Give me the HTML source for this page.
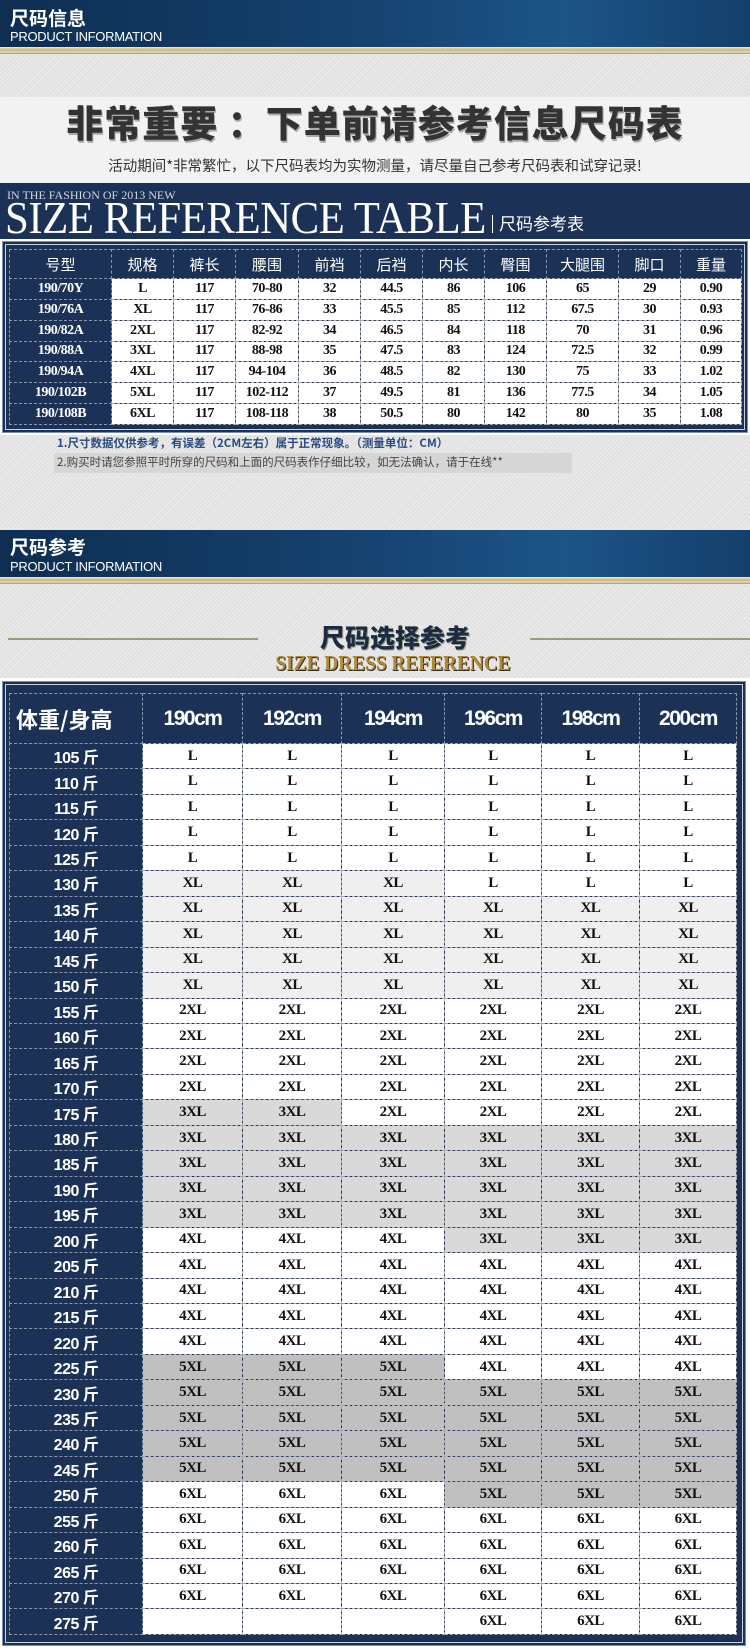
<!DOCTYPE html>
<html><head><meta charset="utf-8"><style>
*{margin:0;padding:0;box-sizing:border-box}
body{width:750px;height:1649px;position:relative;overflow:hidden;background:#e3e3e3;font-family:"Liberation Sans","Noto Sans CJK SC",sans-serif;
background-image:repeating-linear-gradient(135deg,#e9e9e9 0 2px,#dcdcdc 2px 3px)}
.abs{position:absolute}
.band{left:0;width:750px;background:linear-gradient(90deg,#0e2e52 0%,#15406d 45%,#1c5487 75%,#143f6b 100%)}
.gold{left:0;width:750px;height:7px;background:linear-gradient(#f3ead0,#c9b27a 45%,#e8dcb8 70%,#a89668)}
.bt1{color:#fff;font-weight:bold;font-size:19px;font-family:"Noto Sans CJK SC",sans-serif;left:10px;line-height:22px}
.bt2{color:#fff;font-size:13px;left:10px;letter-spacing:-0.3px;line-height:14px}
table{border-collapse:collapse;position:absolute;table-layout:fixed}
td{text-align:center;font-family:"Liberation Serif","Noto Serif CJK SC",serif;font-weight:bold;color:#111;border:1px dashed #aaa;padding:0;overflow:hidden;white-space:nowrap}
td.h{background:#1b3256;color:#fff;border-color:#8a97aa}
.frame{background:#1b3256;border:1px solid #7f8ea6;box-shadow:inset 0 0 0 2px #1b3256,inset 0 0 0 3px #c9d0dc}
#t2 td.h{font-family:'Liberation Sans','Noto Sans CJK SC',sans-serif;font-size:16px;letter-spacing:-0.5px}
#t2 td{font-size:15px;letter-spacing:-0.5px}
.cm{font-family:'Liberation Sans',sans-serif!important;font-size:21px;font-weight:bold;letter-spacing:-1.5px}
</style></head><body>
<div class="abs band" style="top:0;height:47px"></div>
<div class="abs bt1" style="top:7px">尺码信息</div>
<div class="abs bt2" style="top:30px">PRODUCT INFORMATION</div>
<div class="abs gold" style="top:47px"></div>
<div class="abs" style="left:0;top:97px;width:750px;height:86px;background:#f2f2f2"></div>
<div class="abs" style="left:0;top:99px;width:750px;text-align:center;font-size:37px;font-weight:900;color:#333;font-family:'Noto Sans CJK SC',sans-serif;line-height:44px;letter-spacing:1px;text-shadow:1px 2px 0 #aaa">非常重要 ：下单前请参考信息尺码表</div>
<div class="abs" style="left:0;top:156px;width:750px;text-align:center;font-size:14.5px;color:#333;line-height:20px;font-family:'Noto Sans CJK SC',sans-serif">活动期间*非常繁忙，以下尺码表均为实物测量，请尽量自己参考尺码表和试穿记录!</div>
<div class="abs" style="left:0;top:183px;width:750px;height:56px;background:#1b3256"></div>
<div class="abs" style="left:7px;top:189px;color:#d0d6e0;font-family:'Liberation Serif',serif;font-size:12px;line-height:13px">IN THE FASHION OF 2013 NEW</div>
<div class="abs" style="left:5px;top:196px;color:#fff;font-family:'Liberation Serif',serif;font-size:46px;line-height:44px;letter-spacing:-0.5px;transform:scaleX(0.93);transform-origin:left">SIZE REFERENCE TABLE</div>
<div class="abs" style="left:492px;top:215px;width:1px;height:18px;background:#fff"></div>
<div class="abs" style="left:499px;top:211px;color:#fff;font-size:17px;line-height:24px;font-family:'Noto Sans CJK SC',sans-serif">尺码参考表</div>
<div class="abs" style="left:0;top:239px;width:750px;height:196px;background:#fff"></div>
<div class="abs frame" style="left:2px;top:241px;width:746px;height:192px"></div>
<table style="left:9px;top:249px;width:732px">
<colgroup><col style="width:102px"><col style="width:62px"><col style="width:62px"><col style="width:63px"><col style="width:62px"><col style="width:62px"><col style="width:62px"><col style="width:62px"><col style="width:72px"><col style="width:62px"><col style="width:61px"></colgroup>
<tr style="height:29px"><td class="h" style="font-family:'Noto Sans CJK SC',sans-serif;font-weight:normal;font-size:15px">号型</td><td class="h" style="font-family:'Noto Sans CJK SC',sans-serif;font-weight:normal;font-size:15px">规格</td><td class="h" style="font-family:'Noto Sans CJK SC',sans-serif;font-weight:normal;font-size:15px">裤长</td><td class="h" style="font-family:'Noto Sans CJK SC',sans-serif;font-weight:normal;font-size:15px">腰围</td><td class="h" style="font-family:'Noto Sans CJK SC',sans-serif;font-weight:normal;font-size:15px">前裆</td><td class="h" style="font-family:'Noto Sans CJK SC',sans-serif;font-weight:normal;font-size:15px">后裆</td><td class="h" style="font-family:'Noto Sans CJK SC',sans-serif;font-weight:normal;font-size:15px">内长</td><td class="h" style="font-family:'Noto Sans CJK SC',sans-serif;font-weight:normal;font-size:15px">臀围</td><td class="h" style="font-family:'Noto Sans CJK SC',sans-serif;font-weight:normal;font-size:15px">大腿围</td><td class="h" style="font-family:'Noto Sans CJK SC',sans-serif;font-weight:normal;font-size:15px">脚口</td><td class="h" style="font-family:'Noto Sans CJK SC',sans-serif;font-weight:normal;font-size:15px">重量</td></tr>
</table>
<table style="left:9px;top:278px;width:732px;height:147px;font-size:14px;letter-spacing:-0.5px">
<colgroup><col style="width:102px"><col style="width:62px"><col style="width:62px"><col style="width:63px"><col style="width:62px"><col style="width:62px"><col style="width:62px"><col style="width:62px"><col style="width:72px"><col style="width:62px"><col style="width:61px"></colgroup>
<tr style="background:#fff"><td class="h">190/70Y</td><td>L</td><td>117</td><td>70-80</td><td>32</td><td>44.5</td><td>86</td><td>106</td><td>65</td><td>29</td><td>0.90</td></tr>
<tr style="background:#fff"><td class="h">190/76A</td><td>XL</td><td>117</td><td>76-86</td><td>33</td><td>45.5</td><td>85</td><td>112</td><td>67.5</td><td>30</td><td>0.93</td></tr>
<tr style="background:#fff"><td class="h">190/82A</td><td>2XL</td><td>117</td><td>82-92</td><td>34</td><td>46.5</td><td>84</td><td>118</td><td>70</td><td>31</td><td>0.96</td></tr>
<tr style="background:#fff"><td class="h">190/88A</td><td>3XL</td><td>117</td><td>88-98</td><td>35</td><td>47.5</td><td>83</td><td>124</td><td>72.5</td><td>32</td><td>0.99</td></tr>
<tr style="background:#fff"><td class="h">190/94A</td><td>4XL</td><td>117</td><td>94-104</td><td>36</td><td>48.5</td><td>82</td><td>130</td><td>75</td><td>33</td><td>1.02</td></tr>
<tr style="background:#fff"><td class="h">190/102B</td><td>5XL</td><td>117</td><td>102-112</td><td>37</td><td>49.5</td><td>81</td><td>136</td><td>77.5</td><td>34</td><td>1.05</td></tr>
<tr style="background:#fff"><td class="h">190/108B</td><td>6XL</td><td>117</td><td>108-118</td><td>38</td><td>50.5</td><td>80</td><td>142</td><td>80</td><td>35</td><td>1.08</td></tr>
</table>
<div class="abs" style="left:57px;top:435px;color:#2a4a80;font-size:11.5px;font-weight:bold;line-height:16px;font-family:'Noto Sans CJK SC',sans-serif">1.尺寸数据仅供参考，有误差（2CM左右）属于正常现象。（测量单位：CM）</div>
<div class="abs" style="left:54px;top:453px;width:518px;height:20px;background:#d6d6d6"></div>
<div class="abs" style="left:57px;top:454px;color:#444;font-size:11.5px;line-height:17px;font-family:'Noto Sans CJK SC',sans-serif">2.购买时请您参照平时所穿的尺码和上面的尺码表作仔细比较，如无法确认，请于在线**</div>
<div class="abs band" style="top:530px;height:47px"></div>
<div class="abs bt1" style="top:536px">尺码参考</div>
<div class="abs bt2" style="top:560px">PRODUCT INFORMATION</div>
<div class="abs gold" style="top:577px"></div>
<div class="abs" style="left:8px;top:638px;width:250px;height:2px;background:#9b9a7a"></div>
<div class="abs" style="left:530px;top:638px;width:220px;height:2px;background:#9b9a7a"></div>
<div class="abs" style="left:300px;top:620px;width:190px;text-align:center;font-size:25px;font-weight:900;color:#1c2c40;line-height:34px;font-family:'Noto Sans CJK SC',sans-serif;text-shadow:1px 1px 0 #998">尺码选择参考</div>
<div class="abs" style="left:258px;top:651px;width:270px;text-align:center;font-family:'Liberation Serif',serif;font-weight:bold;font-size:21px;color:#b08a3a;line-height:24px;text-shadow:1px 1px 0 #3a2a10;transform:scaleX(0.92)">SIZE DRESS REFERENCE</div>
<div class="abs" style="left:0;top:678px;width:750px;height:971px;background:#fff"></div>
<div class="abs frame" style="left:2px;top:681px;width:744px;height:965px"></div>
<table style="left:9px;top:693px;width:727px">
<colgroup><col style="width:133px"><col style="width:100px"><col style="width:99px"><col style="width:103px"><col style="width:97px"><col style="width:98px"><col style="width:97px"></colgroup>
<tr style="height:50px"><td class="h" style="font-family:'Noto Sans CJK SC',sans-serif;font-size:22px;text-align:left;padding-left:6px">体重/身高</td><td class="h cm">190cm</td><td class="h cm">192cm</td><td class="h cm">194cm</td><td class="h cm">196cm</td><td class="h cm">198cm</td><td class="h cm">200cm</td></tr>
</table>
<table id="t2" style="left:9px;top:743px;width:727px;height:892px">
<colgroup><col style="width:133px"><col style="width:100px"><col style="width:99px"><col style="width:103px"><col style="width:97px"><col style="width:98px"><col style="width:97px"></colgroup>
<tbody>
<tr><td class="h">105 斤</td><td style="background:#fff">L</td><td style="background:#fff">L</td><td style="background:#fff">L</td><td style="background:#fff">L</td><td style="background:#fff">L</td><td style="background:#fff">L</td></tr>
<tr><td class="h">110 斤</td><td style="background:#fff">L</td><td style="background:#fff">L</td><td style="background:#fff">L</td><td style="background:#fff">L</td><td style="background:#fff">L</td><td style="background:#fff">L</td></tr>
<tr><td class="h">115 斤</td><td style="background:#fff">L</td><td style="background:#fff">L</td><td style="background:#fff">L</td><td style="background:#fff">L</td><td style="background:#fff">L</td><td style="background:#fff">L</td></tr>
<tr><td class="h">120 斤</td><td style="background:#fff">L</td><td style="background:#fff">L</td><td style="background:#fff">L</td><td style="background:#fff">L</td><td style="background:#fff">L</td><td style="background:#fff">L</td></tr>
<tr><td class="h">125 斤</td><td style="background:#fff">L</td><td style="background:#fff">L</td><td style="background:#fff">L</td><td style="background:#fff">L</td><td style="background:#fff">L</td><td style="background:#fff">L</td></tr>
<tr><td class="h">130 斤</td><td style="background:#efefef">XL</td><td style="background:#efefef">XL</td><td style="background:#efefef">XL</td><td style="background:#fff">L</td><td style="background:#fff">L</td><td style="background:#fff">L</td></tr>
<tr><td class="h">135 斤</td><td style="background:#efefef">XL</td><td style="background:#efefef">XL</td><td style="background:#efefef">XL</td><td style="background:#efefef">XL</td><td style="background:#efefef">XL</td><td style="background:#efefef">XL</td></tr>
<tr><td class="h">140 斤</td><td style="background:#efefef">XL</td><td style="background:#efefef">XL</td><td style="background:#efefef">XL</td><td style="background:#efefef">XL</td><td style="background:#efefef">XL</td><td style="background:#efefef">XL</td></tr>
<tr><td class="h">145 斤</td><td style="background:#efefef">XL</td><td style="background:#efefef">XL</td><td style="background:#efefef">XL</td><td style="background:#efefef">XL</td><td style="background:#efefef">XL</td><td style="background:#efefef">XL</td></tr>
<tr><td class="h">150 斤</td><td style="background:#efefef">XL</td><td style="background:#efefef">XL</td><td style="background:#efefef">XL</td><td style="background:#efefef">XL</td><td style="background:#efefef">XL</td><td style="background:#efefef">XL</td></tr>
<tr><td class="h">155 斤</td><td style="background:#fff">2XL</td><td style="background:#fff">2XL</td><td style="background:#fff">2XL</td><td style="background:#fff">2XL</td><td style="background:#fff">2XL</td><td style="background:#fff">2XL</td></tr>
<tr><td class="h">160 斤</td><td style="background:#fff">2XL</td><td style="background:#fff">2XL</td><td style="background:#fff">2XL</td><td style="background:#fff">2XL</td><td style="background:#fff">2XL</td><td style="background:#fff">2XL</td></tr>
<tr><td class="h">165 斤</td><td style="background:#fff">2XL</td><td style="background:#fff">2XL</td><td style="background:#fff">2XL</td><td style="background:#fff">2XL</td><td style="background:#fff">2XL</td><td style="background:#fff">2XL</td></tr>
<tr><td class="h">170 斤</td><td style="background:#fff">2XL</td><td style="background:#fff">2XL</td><td style="background:#fff">2XL</td><td style="background:#fff">2XL</td><td style="background:#fff">2XL</td><td style="background:#fff">2XL</td></tr>
<tr><td class="h">175 斤</td><td style="background:#d9d9d9">3XL</td><td style="background:#d9d9d9">3XL</td><td style="background:#fff">2XL</td><td style="background:#fff">2XL</td><td style="background:#fff">2XL</td><td style="background:#fff">2XL</td></tr>
<tr><td class="h">180 斤</td><td style="background:#d9d9d9">3XL</td><td style="background:#d9d9d9">3XL</td><td style="background:#d9d9d9">3XL</td><td style="background:#d9d9d9">3XL</td><td style="background:#d9d9d9">3XL</td><td style="background:#d9d9d9">3XL</td></tr>
<tr><td class="h">185 斤</td><td style="background:#d9d9d9">3XL</td><td style="background:#d9d9d9">3XL</td><td style="background:#d9d9d9">3XL</td><td style="background:#d9d9d9">3XL</td><td style="background:#d9d9d9">3XL</td><td style="background:#d9d9d9">3XL</td></tr>
<tr><td class="h">190 斤</td><td style="background:#d9d9d9">3XL</td><td style="background:#d9d9d9">3XL</td><td style="background:#d9d9d9">3XL</td><td style="background:#d9d9d9">3XL</td><td style="background:#d9d9d9">3XL</td><td style="background:#d9d9d9">3XL</td></tr>
<tr><td class="h">195 斤</td><td style="background:#d9d9d9">3XL</td><td style="background:#d9d9d9">3XL</td><td style="background:#d9d9d9">3XL</td><td style="background:#d9d9d9">3XL</td><td style="background:#d9d9d9">3XL</td><td style="background:#d9d9d9">3XL</td></tr>
<tr><td class="h">200 斤</td><td style="background:#fff">4XL</td><td style="background:#fff">4XL</td><td style="background:#fff">4XL</td><td style="background:#d9d9d9">3XL</td><td style="background:#d9d9d9">3XL</td><td style="background:#d9d9d9">3XL</td></tr>
<tr><td class="h">205 斤</td><td style="background:#fff">4XL</td><td style="background:#fff">4XL</td><td style="background:#fff">4XL</td><td style="background:#fff">4XL</td><td style="background:#fff">4XL</td><td style="background:#fff">4XL</td></tr>
<tr><td class="h">210 斤</td><td style="background:#fff">4XL</td><td style="background:#fff">4XL</td><td style="background:#fff">4XL</td><td style="background:#fff">4XL</td><td style="background:#fff">4XL</td><td style="background:#fff">4XL</td></tr>
<tr><td class="h">215 斤</td><td style="background:#fff">4XL</td><td style="background:#fff">4XL</td><td style="background:#fff">4XL</td><td style="background:#fff">4XL</td><td style="background:#fff">4XL</td><td style="background:#fff">4XL</td></tr>
<tr><td class="h">220 斤</td><td style="background:#fff">4XL</td><td style="background:#fff">4XL</td><td style="background:#fff">4XL</td><td style="background:#fff">4XL</td><td style="background:#fff">4XL</td><td style="background:#fff">4XL</td></tr>
<tr><td class="h">225 斤</td><td style="background:#c0c0c0">5XL</td><td style="background:#c0c0c0">5XL</td><td style="background:#c0c0c0">5XL</td><td style="background:#fff">4XL</td><td style="background:#fff">4XL</td><td style="background:#fff">4XL</td></tr>
<tr><td class="h">230 斤</td><td style="background:#c0c0c0">5XL</td><td style="background:#c0c0c0">5XL</td><td style="background:#c0c0c0">5XL</td><td style="background:#c0c0c0">5XL</td><td style="background:#c0c0c0">5XL</td><td style="background:#c0c0c0">5XL</td></tr>
<tr><td class="h">235 斤</td><td style="background:#c0c0c0">5XL</td><td style="background:#c0c0c0">5XL</td><td style="background:#c0c0c0">5XL</td><td style="background:#c0c0c0">5XL</td><td style="background:#c0c0c0">5XL</td><td style="background:#c0c0c0">5XL</td></tr>
<tr><td class="h">240 斤</td><td style="background:#c0c0c0">5XL</td><td style="background:#c0c0c0">5XL</td><td style="background:#c0c0c0">5XL</td><td style="background:#c0c0c0">5XL</td><td style="background:#c0c0c0">5XL</td><td style="background:#c0c0c0">5XL</td></tr>
<tr><td class="h">245 斤</td><td style="background:#c0c0c0">5XL</td><td style="background:#c0c0c0">5XL</td><td style="background:#c0c0c0">5XL</td><td style="background:#c0c0c0">5XL</td><td style="background:#c0c0c0">5XL</td><td style="background:#c0c0c0">5XL</td></tr>
<tr><td class="h">250 斤</td><td style="background:#fff">6XL</td><td style="background:#fff">6XL</td><td style="background:#fff">6XL</td><td style="background:#c0c0c0">5XL</td><td style="background:#c0c0c0">5XL</td><td style="background:#c0c0c0">5XL</td></tr>
<tr><td class="h">255 斤</td><td style="background:#fff">6XL</td><td style="background:#fff">6XL</td><td style="background:#fff">6XL</td><td style="background:#fff">6XL</td><td style="background:#fff">6XL</td><td style="background:#fff">6XL</td></tr>
<tr><td class="h">260 斤</td><td style="background:#fff">6XL</td><td style="background:#fff">6XL</td><td style="background:#fff">6XL</td><td style="background:#fff">6XL</td><td style="background:#fff">6XL</td><td style="background:#fff">6XL</td></tr>
<tr><td class="h">265 斤</td><td style="background:#fff">6XL</td><td style="background:#fff">6XL</td><td style="background:#fff">6XL</td><td style="background:#fff">6XL</td><td style="background:#fff">6XL</td><td style="background:#fff">6XL</td></tr>
<tr><td class="h">270 斤</td><td style="background:#fff">6XL</td><td style="background:#fff">6XL</td><td style="background:#fff">6XL</td><td style="background:#fff">6XL</td><td style="background:#fff">6XL</td><td style="background:#fff">6XL</td></tr>
<tr><td class="h">275 斤</td><td style="background:#fff"></td><td style="background:#fff"></td><td style="background:#fff"></td><td style="background:#fff">6XL</td><td style="background:#fff">6XL</td><td style="background:#fff">6XL</td></tr>
</tbody></table>
</body></html>
